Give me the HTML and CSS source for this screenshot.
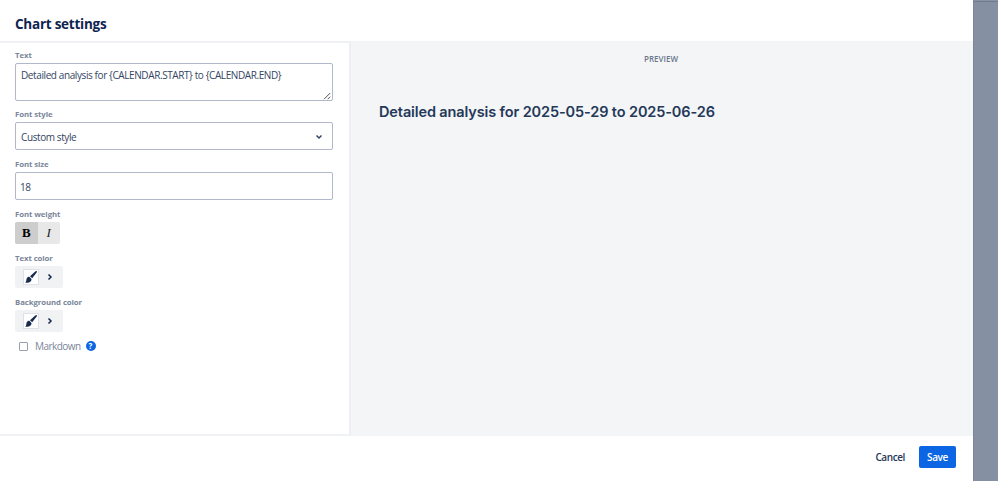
FILE: index.html
```html
<!DOCTYPE html>
<html lang="en">
<head>
<meta charset="utf-8">
<title>Chart settings</title>
<link rel="stylesheet" href="styles.css">
</head>
<body>
<div class="dialog">
  <header class="header"><h1 class="title"><span>Chart settings</span></h1></header>
  <main class="main">
    <section class="form">
      <div class="label">Text</div>
      <div class="box textarea"><span>Detailed analysis for {CALENDAR.START} to {CALENDAR.END}</span>
        <svg class="grip" width="8" height="8" viewBox="0 0 8 8"><path d="M1 7.200 7.200 1M4.700 7.200 7.200 4.700"/></svg>
      </div>
      <div class="label">Font style</div>
      <div class="box select"><span>Custom style</span>
        <svg class="chevron" width="8" height="6" viewBox="0 0 8 6"><path d="M1.500 1.500 4 4 6.500 1.500"/></svg>
      </div>
      <div class="label">Font size</div>
      <div class="box input"><span>18</span></div>
      <div class="label">Font weight</div>
      <div class="toggle"><span class="bold">B</span><span class="italic">I</span></div>
      <div class="label">Text color</div>
      <div class="picker">
        <span class="swatch"><svg width="12" height="12" viewBox="0 0 12 12"><path d="M11.700.3c.5.5.2 1-.2 1.500L7.200 7.300 5 5.200 10.200.6c.5-.4 1.100-.7 1.500-.3ZM4.300 5.800 6.500 8c.2 2.600-2.300 4.300-6.300 3.500C1.700 10.500 1 9.300 1.600 7.700 2 6.400 3.100 5.800 4.300 5.800Z"/></svg></span>
        <svg class="arrow" width="6" height="8" viewBox="0 0 6 8"><path d="M1.500 1.500 4 4 1.500 6.500"/></svg>
      </div>
      <div class="label">Background color</div>
      <div class="picker">
        <span class="swatch"><svg width="12" height="12" viewBox="0 0 12 12"><path d="M11.700.3c.5.5.2 1-.2 1.500L7.200 7.300 5 5.200 10.200.6c.5-.4 1.100-.7 1.500-.3ZM4.300 5.800 6.500 8c.2 2.600-2.300 4.300-6.300 3.500C1.700 10.500 1 9.300 1.600 7.700 2 6.400 3.100 5.800 4.300 5.800Z"/></svg></span>
        <svg class="arrow" width="6" height="8" viewBox="0 0 6 8"><path d="M1.500 1.500 4 4 1.500 6.500"/></svg>
      </div>
      <div class="markdown"><span class="checkbox"></span><span class="markdown-label">Markdown</span><span class="help">?</span></div>
    </section>
    <section class="preview">
      <div class="preview-label"><span>PREVIEW</span></div>
      <div class="preview-text"><span>Detailed analysis for 2025-05-29 to 2025-06-26</span></div>
    </section>
  </main>
  <footer class="footer"><span class="cancel">Cancel</span><span class="save">Save</span></footer>
</div>
<div class="backdrop"></div>
</body>
</html>
```
FILE: styles.css
```css
* { box-sizing: border-box; }
body { margin: 0; width: 998px; height: 481px; display: flex; overflow: hidden; background: #fff; font-family: "Open Sans", "Noto Sans", sans-serif; font-size: 10px; letter-spacing: -0.4px; color: #344563; }
svg { display: block; fill: none; flex: none; }
.dialog { width: 973px; display: flex; flex-direction: column; }
.header { height: 41px; padding: 14px 15px 0; }
.title { margin: 0; font-size: 13.5px; line-height: 20px; font-weight: 700; color: #0f2450; letter-spacing: -0.25px; }
.main { height: 395px; display: flex; }
.form { width: 351px; padding: 7px 16px 0 15px; border-top: 2px solid #f0f1f4; border-right: 2px solid #eeeff2; border-bottom: 2px solid #f0f1f4; }
.label { height: 11px; font-size: 7.8px; line-height: 10px; font-weight: 700; letter-spacing: -0.08px; color: #7a869a; white-space: nowrap; }
.box { width: 318px; border: 1px solid #b0b8c9; border-radius: 2px; display: flex; white-space: nowrap; }
.textarea { height: 38px; margin: 2px 0 8px; padding: 4px 1px 0 5px; line-height: 15px; justify-content: space-between; }
.grip { align-self: flex-end; stroke: #555; stroke-width: 1; }
.select, .input { height: 28px; margin: 2px 0 9px; padding: 1px 9px 0 5px; align-items: center; justify-content: space-between; }
.input { padding-left: 4px; }
.chevron { stroke: #344563; stroke-width: 1.5; }
.toggle { width: 45px; height: 22px; margin: 2px 0 9px; display: flex; background: #e8e8e8; border-radius: 2px; overflow: hidden; font: 13px/22px "Liberation Serif", serif; letter-spacing: 0; color: #222; text-align: center; }
.toggle span { flex: 1; }
.bold { background: #cdcdcd; font-weight: 700; color: #000; }
.italic { font-style: italic; }
.picker { width: 48px; height: 22px; margin: 2px 0 9px; padding-left: 8px; display: flex; align-items: center; gap: 8px; background: #f1f2f4; border-radius: 2px; }
.swatch { width: 16px; height: 16px; display: flex; align-items: center; justify-content: center; background: #fff; border: 1px solid #dfe1e6; }
.swatch svg { fill: #172b4d; }
.arrow { stroke: #172b4d; stroke-width: 1.5; }
.markdown { height: 14px; margin-top: -2px; padding-left: 4px; display: flex; align-items: center; color: #7a869a; }
.markdown-label { letter-spacing: -0.55px; }
.checkbox { width: 9px; height: 9px; border: 1px solid #97a0af; border-radius: 1px; margin-right: 7px; }
.help { width: 10px; height: 10px; margin-left: 5px; border-radius: 50%; background: #0c66e4; color: #fff; font-size: 8px; line-height: 10px; font-weight: 700; letter-spacing: 0; text-align: center; }
.preview { flex: 1; background: #f3f5f7; padding: 12px 0 0 28px; }
.preview-label { height: 11px; margin: 0 30px 0 0; font-size: 8px; line-height: 11px; font-weight: 600; letter-spacing: 0; color: #6b778c; text-align: center; }
.preview-text { margin-top: 38px; font-family: Inter, sans-serif; font-weight: 600; font-size: 14.5px; line-height: 20px; letter-spacing: -0.12px; color: #253858; white-space: nowrap; }
.footer { height: 45px; padding: 10px 17px 0 0; display: flex; justify-content: flex-end; line-height: 22px; font-weight: 600; color: #253858; }
.cancel { margin-right: 14px; }
.save { width: 37px; height: 22px; background: #0c66e4; color: #fff; border-radius: 2px; text-align: center; }
.backdrop { width: 25px; border-left: 1px solid #7a869a; background: linear-gradient(#8993a4 0 1px, #6f7b90 1px 2px, #8590a2 2px); }
```
